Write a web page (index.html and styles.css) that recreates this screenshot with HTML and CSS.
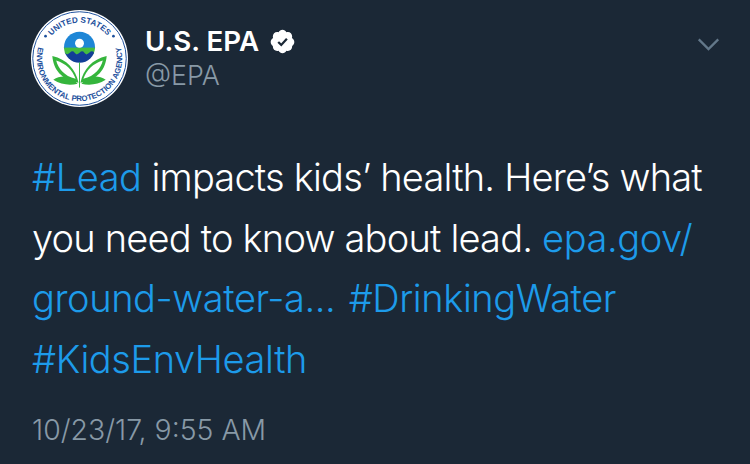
FILE: index.html
```html
<!DOCTYPE html>
<html lang="en">
<head>
<meta charset="utf-8">
<title>U.S. EPA tweet</title>
<link rel="stylesheet" href="styles.css">
</head>
<body>
<main class="tweet">
  <header class="head">
    <svg class="logo" viewBox="0 0 100 100" aria-label="EPA seal">
      <defs>
        <path id="arcTop" d="M19.7 28.8 A37 37 0 0 1 80.3 28.8"/>
        <path id="arcBottom" d="M10.1 31.4 A44 44 0 1 0 89.9 31.4"/>
        <clipPath id="globe"><circle cx="50" cy="38.5" r="16"/></clipPath>
      </defs>
      <circle cx="50" cy="50" r="50" fill="#fff"/>
      <circle cx="50" cy="50" r="48.2" fill="none" stroke="#1c4f9c" stroke-width="1"/>
      <text class="seal"><textPath href="#arcTop" startOffset="50%" text-anchor="middle">UNITED STATES</textPath></text>
      <text class="seal seal-low"><textPath href="#arcBottom" startOffset="50%" text-anchor="middle">ENVIRONMENTAL PROTECTION AGENCY</textPath></text>
      <circle cx="15" cy="27" r="1.4" fill="#1c4f9c"/>
      <circle cx="85" cy="27" r="1.4" fill="#1c4f9c"/>
      <g clip-path="url(#globe)">
        <rect x="30" y="20" width="40" height="20" fill="#1e86d6"/>
        <rect x="30" y="38.8" width="40" height="7" fill="#45bd3f"/>
        <path d="M30 44 q3 -3 5 0 t5 0 t5 0 t5 0 t5 0 t5 0 t5 0 t5 0 V60 H30 Z" fill="#123f96"/>
      </g>
      <circle cx="50" cy="34.3" r="4.6" fill="#fff"/>
      <path class="stem" d="M50 54 V80"/>
      <path class="leaf" d="M49 75 C46 61 37 51 22 47.5 C23 61 31 72 49 75 Z M46 71 C34 68 28 60 26 52 C36 55 43 62 46 71 Z" fill-rule="evenodd"/>
      <path class="leaf" d="M51 75 C54 61 63 51 78 47.5 C77 61 69 72 51 75 Z M54 71 C66 68 72 60 74 52 C64 55 57 62 54 71 Z" fill-rule="evenodd"/>
      <path class="leaf" d="M48 76 C40 67 31 67 23 72 C31 77 40 78 48 76 Z"/>
      <path class="leaf" d="M52 76 C60 67 69 67 77 72 C69 77 60 78 52 76 Z"/>
    </svg>
    <div class="names">
      <div class="name-row">
        <span class="name">U.S. EPA</span>
        <svg class="badge" viewBox="0 0 24 24" aria-label="Verified">
          <path fill="#fff" d="M22.5 12.5c0-1.58-.88-2.95-2.16-3.6.16-.43.25-.9.25-1.4 0-2.2-1.7-3.98-3.8-3.98-.47 0-.92.09-1.33.25C14.85 2.5 13.5 1.6 12 1.6s-2.85.9-3.46 2.17c-.41-.16-.86-.25-1.33-.25-2.1 0-3.8 1.78-3.8 3.98 0 .5.09.97.25 1.4-1.28.65-2.16 2.02-2.16 3.6 0 1.5.78 2.8 1.94 3.49-.02.17-.03.34-.03.51 0 2.2 1.7 3.98 3.8 3.98.47 0 .92-.09 1.33-.25.61 1.27 1.96 2.17 3.46 2.17s2.85-.9 3.46-2.17c.41.16.86.25 1.33.25 2.1 0 3.8-1.78 3.8-3.98 0-.17-.01-.34-.03-.51 1.16-.69 1.94-1.99 1.94-3.49z"/>
          <path fill="none" stroke="#1b2836" stroke-width="2" d="M8.2 12.4l2.7 2.7 5-5.6"/>
        </svg>
      </div>
      <div class="handle">@EPA</div>
    </div>
    <svg class="chevron" viewBox="0 0 24 14" aria-hidden="true">
      <path d="M1.5 1.5 L12 12 L22.5 1.5"/>
    </svg>
  </header>
  <p class="body"><a>#Lead</a> impacts kids’ health. Here’s what you need to know about lead. <a>epa.gov/<br>ground-water-a... #DrinkingWater<br>#KidsEnvHealth</a></p>
  <time class="stamp">10/23/17, 9:55 AM</time>
</main>
</body>
</html>
```

FILE: styles.css
```css
html, body {
  margin: 0;
  height: 100%;
}
body {
  background: #1b2836;
  font-family: Inter, "Liberation Sans", sans-serif;
  overflow: hidden;
}
.tweet {
  display: flex;
  flex-direction: column;
  padding: 10px 30px 0 31px;
}
.head {
  display: flex;
  align-items: flex-start;
}
.logo {
  width: 97px;
  height: 97px;
  flex: none;
  margin-right: 17px;
}
.seal {
  font-family: "Liberation Sans", sans-serif;
  font-size: 8.4px;
  font-weight: 700;
  fill: #1c4f9c;
}
.seal-low {
  font-size: 8.1px;
}
.stem {
  stroke: #35b53c;
  stroke-width: 1;
  fill: none;
}
.leaf {
  fill: #35b53c;
}
.names {
  flex: 1;
  padding-top: 14px;
}
.name-row {
  display: flex;
  align-items: center;
  gap: 10px;
  height: 34px;
}
.name {
  color: #fff;
  font-size: 27.7px;
  font-weight: 600;
}
.badge {
  width: 27px;
  height: 27px;
}
.handle {
  color: #8899a6;
  font-size: 26.8px;
  line-height: 34px;
  font-weight: 300;
}
.chevron {
  width: 23px;
  height: 13px;
  margin: 28px 0 0 0;
  flex: none;
}
.chevron path {
  fill: none;
  stroke: #63788a;
  stroke-width: 2.4;
}
.body {
  margin: 0 0 0 1px;
  padding-top: 40px;
  color: #fff;
  font-size: 38px;
  line-height: 60.5px;
  font-weight: 300;
  letter-spacing: -0.8px;
  width: 690px;
}
.body a {
  color: #1d9bea;
  letter-spacing: -0.42px;
  word-spacing: 3px;
}
.stamp {
  color: #8899a6;
  font-size: 28.4px;
  line-height: 34px;
  font-weight: 300;
  margin: 24px 0 0 1px;
}
```
